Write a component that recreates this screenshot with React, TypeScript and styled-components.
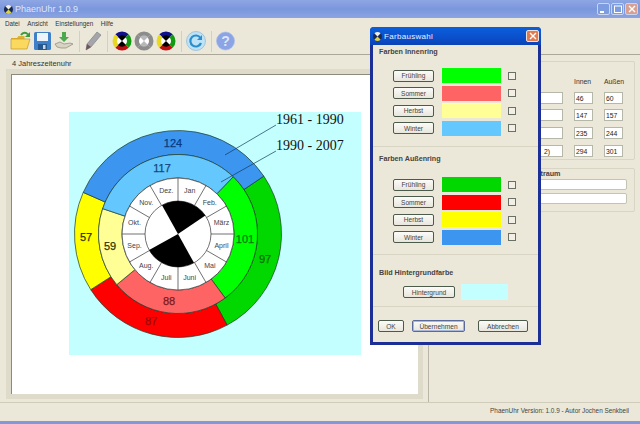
import styled, { createGlobalStyle } from 'styled-components';

const GlobalStyle = createGlobalStyle`
  html, body {
    margin: 0;
    padding: 0;
    background: #ece9d8;
    overflow: hidden;
  }
  * {
    box-sizing: border-box;
  }
`;

const CX = 177;
const CY = 232;

const polar = (r: number, deg: number) => {
  const a = ((deg - 90) * Math.PI) / 180;
  return [CX + r * Math.cos(a), CY + r * Math.sin(a)];
};

const ringPath = (r1: number, r2: number, from: number, to: number) => {
  const [ax, ay] = polar(r2, from);
  const [bx, by] = polar(r2, to);
  const [cx, cy] = polar(r1, to);
  const [dx, dy] = polar(r1, from);
  const large = to - from > 180 ? 1 : 0;
  return `M${ax} ${ay}A${r2} ${r2} 0 ${large} 1 ${bx} ${by}L${cx} ${cy}A${r1} ${r1} 0 ${large} 0 ${dx} ${dy}Z`;
};

const slicePath = (r: number, from: number, to: number) => {
  const [ax, ay] = polar(r, from);
  const [bx, by] = polar(r, to);
  return `M${CX} ${CY}L${ax} ${ay}A${r} ${r} 0 0 1 ${bx} ${by}Z`;
};

const outerRing = [
  { days: 97, color: '#00d800' },
  { days: 87, color: '#ff0000' },
  { days: 57, color: '#ffff00' },
  { days: 124, color: '#3c96f0' },
];
const innerRing = [
  { days: 101, color: '#00ff00' },
  { days: 88, color: '#ff6464' },
  { days: 59, color: '#ffff96' },
  { days: 117, color: '#64c8ff' },
];

const months = ['Jan', 'Feb.', 'März', 'April', 'Mai', 'Juni', 'Juli', 'Aug.', 'Sep.', 'Okt.', 'Nov.', 'Dez.'];

const ringLabels = [
  { x: 172, y: 145, t: '124', c: '#0a3a80' },
  { x: 161, y: 170, t: '117', c: '#16457a' },
  { x: 244, y: 241, t: '101', c: '#0a7a0a' },
  { x: 264, y: 261, t: '97', c: '#0a6a0a' },
  { x: 168, y: 303, t: '88', c: '#7a1a1a' },
  { x: 150, y: 323, t: '87', c: '#9a0a0a' },
  { x: 109, y: 248, t: '59', c: '#333300' },
  { x: 85, y: 239, t: '57', c: '#333300' },
];

function Ring({ data, r1, r2, start }: { data: { days: number; color: string }[]; r1: number; r2: number; start: number }) {
  let angle = start;
  return (
    <>
      {data.map((s) => {
        const from = angle;
        angle += (s.days * 360) / 365;
        return <path key={s.color} d={ringPath(r1, r2, from, angle)} fill={s.color} stroke="#1c3a2a" strokeWidth="0.7" />;
      })}
    </>
  );
}

function SeasonChart() {
  return (
    <ChartSvg viewBox="68 110 292 243">
      <rect x="68" y="110" width="292" height="243" fill="#c4ffff" />
      <Ring data={outerRing} r1={79.5} r2={103.5} start={56} />
      <Ring data={innerRing} r1={56} r2={79.5} start={44} />
      <circle cx={CX} cy={CY} r="56" fill="#fff" stroke="#333" strokeWidth="0.7" />
      {months.map((m, i) => {
        const [x1, y1] = polar(33, i * 30);
        const [x2, y2] = polar(56, i * 30);
        const [tx, ty] = polar(45, i * 30 + 15);
        return (
          <g key={m}>
            <line x1={x1} y1={y1} x2={x2} y2={y2} stroke="#333" strokeWidth="0.7" />
            <text x={tx} y={ty + 2.5} textAnchor="middle" fontFamily="'Liberation Sans', sans-serif" fontSize="7" fill="#444">
              {m}
            </text>
          </g>
        );
      })}
      <circle cx={CX} cy={CY} r="33" fill="#fff" stroke="#333" strokeWidth="0.7" />
      <path d={slicePath(33, -29, 56)} fill="#000" />
      <path d={slicePath(33, 151, 241)} fill="#000" />
      {ringLabels.map((l) => (
        <text key={l.t} x={l.x} y={l.y} textAnchor="middle" fontFamily="'Liberation Sans', sans-serif" fontSize="11" fill={l.c} stroke={l.c} strokeWidth="0.25">
          {l.t}
        </text>
      ))}
      <line x1="224" y1="153" x2="275" y2="123" stroke="#123a5a" strokeWidth="0.7" />
      <line x1="220" y1="180" x2="275" y2="149" stroke="#123a5a" strokeWidth="0.7" />
      <text x="275" y="122" fontFamily="'Liberation Serif', serif" fontSize="14" fill="#111">
        1961 - 1990
      </text>
      <text x="275" y="148" fontFamily="'Liberation Serif', serif" fontSize="14" fill="#111">
        1990 - 2007
      </text>
    </ChartSvg>
  );
}

function WheelIcon({ colors, hub }: { colors: string[]; hub: string }) {
  const parts = colors.map((c, i) => {
    const from = i * 90 - 45;
    const rad = (d: number) => ((d - 90) * Math.PI) / 180;
    const p = (d: number) => `${10 + 9.5 * Math.cos(rad(d))} ${10 + 9.5 * Math.sin(rad(d))}`;
    return <path key={i} d={`M10 10L${p(from)}A9.5 9.5 0 0 1 ${p(from + 90)}Z`} fill={c} />;
  });
  return (
    <ToolSvg width="20" height="20" viewBox="0 0 20 20">
      {parts}
      <circle cx="10" cy="10" r="5" fill="#fff" />
      <path d="M10 10L6 6A5.6 5.6 0 0 1 14 6Z M10 10L14 14A5.6 5.6 0 0 1 6 14Z" fill={hub} />
    </ToolSvg>
  );
}

function FolderIcon() {
  return (
    <ToolSvg width="21" height="20" viewBox="0 0 21 20">
      <path d="M1 7h6l1.5-2h6v4H1z" fill="#e0b030" />
      <path d="M1 8h14l5 0-3 10H1z" fill="#fbd95e" stroke="#c49a28" strokeWidth="0.7" />
      <path d="M11 4C13 1 16 1 18 3.5" fill="none" stroke="#3c9a3c" strokeWidth="2" />
      <path d="M20 1v5h-5z" fill="#3c9a3c" />
    </ToolSvg>
  );
}

function FloppyIcon() {
  return (
    <ToolSvg width="19" height="20" viewBox="0 0 19 20">
      <rect x="1" y="1" width="17" height="18" rx="1.5" fill="#3f80c8" />
      <rect x="4" y="2" width="11" height="8" fill="#eef3fa" />
      <rect x="5" y="13" width="9" height="6" fill="#24588f" />
      <rect x="10" y="14" width="2.5" height="4" fill="#c8d8ea" />
    </ToolSvg>
  );
}

function ImportIcon() {
  return (
    <ToolSvg width="20" height="20" viewBox="0 0 20 20">
      <path d="M8 1h4v5h3l-5 5-5-5h3z" fill="#4ca84c" />
      <path d="M1 13l5-2 4 2 6-1 3 1-7 4H7l-4-1z" fill="#d8d4c4" stroke="#8c8878" strokeWidth="0.7" />
    </ToolSvg>
  );
}

function PencilIcon() {
  return (
    <ToolSvg width="18" height="20" viewBox="0 0 18 20">
      <path d="M13 1l4 3-10 12-5 3 1-6z" fill="#a4a4ac" stroke="#78787e" strokeWidth="0.6" />
      <path d="M3 13l4 3-5 3z" fill="#70545a" />
    </ToolSvg>
  );
}

function RefreshIcon() {
  return (
    <ToolSvg width="20" height="20" viewBox="0 0 20 20">
      <circle cx="10" cy="10" r="9.5" fill="#bfe3f6" stroke="#8db4d8" strokeWidth="0.7" />
      <path d="M14.5 7A5.5 5.5 0 1 0 15 12" fill="none" stroke="#2c8fcb" strokeWidth="2.2" />
      <path d="M16 4v5h-5z" fill="#2c8fcb" />
    </ToolSvg>
  );
}

function HelpIcon() {
  return (
    <ToolSvg width="19" height="20" viewBox="0 0 19 20">
      <circle cx="9.5" cy="10" r="9" fill="#8aa4e4" stroke="#a8bcec" strokeWidth="0.7" />
      <text x="9.5" y="15" textAnchor="middle" fontFamily="'Liberation Sans', sans-serif" fontWeight="700" fontSize="14" fill="#dfe6fa">
        ?
      </text>
    </ToolSvg>
  );
}

function TitleLogo() {
  return (
    <svg width="9" height="9" viewBox="0 0 20 20">
      <circle cx="10" cy="10" r="10" fill="#1a2a50" />
      <path d="M10 10L3 3A10 10 0 0 1 17 3Z" fill="#eee" />
      <path d="M10 10L17 17A10 10 0 0 1 3 17Z" fill="#d8d050" />
    </svg>
  );
}

const swatchRows = (names: string[], colors: string[]) =>
  names.map((name, i) => (
    <ColorRow key={name}>
      <WinButton>{name}</WinButton>
      <Swatch $color={colors[i]} />
      <CheckBox />
    </ColorRow>
  ));

const seasons = ['Frühling', 'Sommer', 'Herbst', 'Winter'];

const tableRows = [
  { hint: '', inner: '46', outer: '60' },
  { hint: '', inner: '147', outer: '157' },
  { hint: '', inner: '235', outer: '244' },
  { hint: '2)', inner: '294', outer: '301' },
];

export default function App() {
  return (
    <>
      <GlobalStyle />
      <AppWindow>
        <TitleBar>
          <TitleLogo />
          <TitleText>PhaenUhr 1.0.9</TitleText>
          <CaptionButtons>
            <CaptionButton>
              <svg width="7" height="7" viewBox="0 0 7 7">
                <rect x="0" y="5" width="4" height="2" fill="#fff" />
              </svg>
            </CaptionButton>
            <CaptionButton>
              <svg width="8" height="8" viewBox="0 0 8 8">
                <rect x="0.5" y="1" width="7" height="6.5" fill="none" stroke="#fff" />
              </svg>
            </CaptionButton>
            <CaptionButton $close>
              <svg width="8" height="8" viewBox="0 0 8 8">
                <path d="M1 1l6 6M7 1l-6 6" stroke="#fff" strokeWidth="1.4" />
              </svg>
            </CaptionButton>
          </CaptionButtons>
        </TitleBar>
        <MenuBar>
          <span>Datei</span>
          <span>Ansicht</span>
          <span>Einstellungen</span>
          <span>Hilfe</span>
        </MenuBar>
        <ToolBar>
          <FolderIcon />
          <FloppyIcon />
          <ImportIcon />
          <ToolSeparator />
          <PencilIcon />
          <ToolSeparator />
          <WheelIcon colors={['#10108a', '#109a10', '#c01010', '#e8d820']} hub="#000" />
          <WheelIcon colors={['#8c8c8c', '#8c8c8c', '#8c8c8c', '#8c8c8c']} hub="#b8b8b8" />
          <WheelIcon colors={['#10108a', '#109a10', '#c01010', '#e8d820']} hub="#000" />
          <ToolSeparator />
          <RefreshIcon />
          <ToolSeparator />
          <HelpIcon />
        </ToolBar>
        <MainArea>
          <LeftPanel>
            <PanelTitle>4 Jahreszeitenuhr</PanelTitle>
            <PictureBox>
              <SeasonChart />
            </PictureBox>
          </LeftPanel>
          <RightPanel>
            <GroupBox $height={99}>
              <DataGrid>
                <span />
                <ColumnHead>Innen</ColumnHead>
                <ColumnHead>Außen</ColumnHead>
                {tableRows.map((r) => (
                  <DataRow key={r.inner}>
                    <WideInput>{r.hint}</WideInput>
                    <SmallInput>{r.inner}</SmallInput>
                    <SmallInput>{r.outer}</SmallInput>
                  </DataRow>
                ))}
              </DataGrid>
            </GroupBox>
            <GroupBox $height={44}>
              <GroupTitle>Vergleichszeitraum</GroupTitle>
              <RangeInput />
              <RangeInput />
            </GroupBox>
          </RightPanel>
        </MainArea>
        <StatusBar>PhaenUhr Version: 1.0.9 - Autor Jochen Senkbeil</StatusBar>

        <Dialog>
          <DialogTitle>
            <TitleLogo />
            <DialogTitleText>Farbauswahl</DialogTitleText>
            <DialogClose>
              <svg width="8" height="8" viewBox="0 0 8 8">
                <path d="M1 1l6 6M7 1l-6 6" stroke="#fff" strokeWidth="1.4" />
              </svg>
            </DialogClose>
          </DialogTitle>
          <DialogSection $height={102} $top={2}>
            <SectionHeading>Farben Innenring</SectionHeading>
            <ColorRows $top={10}>{swatchRows(seasons, ['#00ff00', '#ff6464', '#ffff96', '#64c8ff'])}</ColorRows>
          </DialogSection>
          <DialogSection $height={108} $top={7}>
            <SectionHeading>Farben Außenring</SectionHeading>
            <ColorRows $top={12}>{swatchRows(seasons, ['#00d800', '#ff0000', '#ffff00', '#3c96f0'])}</ColorRows>
          </DialogSection>
          <DialogSection $height={52} $top={13}>
            <SectionHeading>Bild Hintergrundfarbe</SectionHeading>
            <BackgroundRow>
              <WinButton $width={52}>Hintergrund</WinButton>
              <BackgroundSwatch />
            </BackgroundRow>
          </DialogSection>
          <DialogFooter>
            <WinButton $width={26}>OK</WinButton>
            <WinButton $width={53} $focused>
              Übernehmen
            </WinButton>
            <CancelSlot>
              <WinButton $width={50}>Abbrechen</WinButton>
            </CancelSlot>
          </DialogFooter>
        </Dialog>
      </AppWindow>
    </>
  );
}

const AppWindow = styled.div`
  position: relative;
  width: 640px;
  height: 424px;
  display: flex;
  flex-direction: column;
  background: #ebe8d9;
  border-bottom: 3px solid #8496dc;
  font-family: 'Liberation Sans', Arial, sans-serif;
  color: #222;
  overflow: hidden;
`;

const TitleBar = styled.div`
  height: 18px;
  display: flex;
  align-items: center;
  gap: 2px;
  padding: 0 2px 0 4px;
  background: linear-gradient(to bottom, #8ea6e4 0%, #7b97dc 50%, #8aa3e2 100%);
`;

const TitleText = styled.span`
  font-size: 9px;
  color: #dde6fa;
`;

const CaptionButtons = styled.div`
  margin-left: auto;
  display: flex;
  gap: 1px;
`;

const CaptionButton = styled.div<{ $close?: boolean }>`
  width: 13px;
  height: 12px;
  display: flex;
  align-items: center;
  justify-content: center;
  border: 1px solid #c8d4f2;
  border-radius: 2px;
  background: ${({ $close }) => ($close ? '#d8a090' : '#7d9ce0')};
`;

const MenuBar = styled.div`
  height: 10px;
  display: flex;
  align-items: center;
  padding-left: 5px;
  gap: 7.5px;
  font-size: 6.3px;
  color: #333;
`;

const ToolBar = styled.div`
  height: 27px;
  display: flex;
  align-items: center;
  gap: 2px;
  padding: 0 0 0 10px;
  border-bottom: 1px solid #aca899;
`;

const ToolSvg = styled.svg`
  flex-shrink: 0;
`;

const ToolSeparator = styled.div`
  width: 1px;
  height: 21px;
  margin: 0 2.5px;
  background: #d4d0c0;
`;

const MainArea = styled.div`
  flex: 1;
  display: flex;
  min-height: 0;
`;

const LeftPanel = styled.div`
  width: 429px;
  padding: 4px 0 0 11px;
  border-right: 1px solid #b8b5a6;
  display: flex;
  flex-direction: column;
`;

const PanelTitle = styled.div`
  height: 15px;
  margin-left: 1px;
  font-size: 7.5px;
  line-height: 10px;
  color: #333;
`;

const PictureBox = styled.div`
  width: 407px;
  height: 320px;
  padding: 37px 0 0 57px;
  background: #fff;
  border-top: 1px solid #8c8a7c;
  border-left: 1px solid #8c8a7c;
  outline: 5px solid #dedbca;
  outline-offset: 0;
`;

const ChartSvg = styled.svg`
  display: block;
  width: 292px;
  height: 243px;
`;

const RightPanel = styled.div`
  flex: 1;
  padding: 6px 5px 0 3px;
  display: flex;
  flex-direction: column;
  gap: 8px;
`;

const GroupBox = styled.div<{ $height: number }>`
  height: ${({ $height }) => $height}px;
  border: 1px solid #d8d5c4;
  border-radius: 2px;
  display: flex;
  flex-direction: column;
  padding: 0 7px 0 0;
  align-items: flex-end;
`;

const DataGrid = styled.div`
  margin-top: 16px;
  display: grid;
  grid-template-columns: 62px 19px 19px;
  column-gap: 11px;
  row-gap: 5.7px;
  margin-right: 4px;
  font-size: 6.8px;
`;

const DataRow = styled.div`
  display: contents;
`;

const ColumnHead = styled.div`
  font-size: 6.8px;
  height: 8px;
  line-height: 8px;
  color: #333;
  white-space: nowrap;
`;

const WideInput = styled.div`
  height: 12px;
  background: #fff;
  border: 1px solid #b5b8a8;
  line-height: 11px;
  padding-left: 42px;
`;

const SmallInput = styled.div`
  height: 12px;
  background: #fff;
  border: 1px solid #b5b8a8;
  line-height: 11px;
  padding-left: 1px;
`;

const GroupTitle = styled.div`
  margin-top: -1px;
  width: 128px;
  font-size: 7.2px;
  font-weight: 700;
  line-height: 11px;
  color: #444;
  text-align: left;
  padding-left: 62px;
  white-space: nowrap;
  margin-right: 66px;
`;

const RangeInput = styled.div`
  width: 190px;
  height: 11px;
  margin-bottom: 3px;
  background: #fff;
  border: 1px solid #c4c4b4;
  border-radius: 2px;
`;

const StatusBar = styled.div`
  height: 19px;
  display: flex;
  align-items: center;
  justify-content: flex-end;
  padding: 0 11px 3px 0;
  font-size: 6.4px;
  color: #444;
  border-top: 1px solid #d0cdbc;
`;

const Dialog = styled.div`
  position: absolute;
  left: 370px;
  top: 27px;
  width: 171px;
  height: 318px;
  background: #ebe8d9;
  border: 3px solid #1c2f96;
  border-top: none;
  border-radius: 4px 4px 0 0;
`;

const DialogTitle = styled.div`
  height: 18px;
  margin: 0 -3px;
  padding: 0 2px 0 3px;
  display: flex;
  align-items: center;
  gap: 2px;
  background: linear-gradient(to bottom, #0b5fdc, #0a4cc8 70%, #0a44b4);
  border-radius: 4px 4px 0 0;
`;

const DialogTitleText = styled.span`
  font-size: 8px;
  color: #e8f0ff;
  letter-spacing: 0.3px;
`;

const DialogClose = styled.div`
  margin-left: auto;
  width: 13px;
  height: 12px;
  display: flex;
  align-items: center;
  justify-content: center;
  background: #e07a50;
  border: 1px solid #f0e0d8;
  border-radius: 2px;
`;

const DialogSection = styled.section<{ $height: number; $top: number }>`
  height: ${({ $height }) => $height}px;
  padding: ${({ $top }) => $top}px 3px 0 6px;
  border-bottom: 1px solid #d8d5c4;
`;

const SectionHeading = styled.div`
  font-size: 7.2px;
  font-weight: 700;
  line-height: 10px;
  color: #444;
`;

const ColorRows = styled.div<{ $top: number }>`
  margin: ${({ $top }) => $top}px 0 0 14px;
  display: flex;
  flex-direction: column;
`;

const ColorRow = styled.div`
  height: 17.5px;
  display: grid;
  grid-template-columns: 41px 59px 8px;
  column-gap: 7.5px;
  align-items: center;
`;

const WinButton = styled.div<{ $width?: number; $focused?: boolean }>`
  ${({ $width }) => ($width ? `width: ${$width}px;` : '')}
  height: 12px;
  display: flex;
  align-items: center;
  justify-content: center;
  font-size: 6.6px;
  color: #444;
  background: linear-gradient(to bottom, #fbfbf8, #e8e6dc);
  border: 1px solid ${({ $focused }) => ($focused ? '#5a6a9a' : '#4c5a4c')};
  border-radius: 2px;
  box-shadow: ${({ $focused }) => ($focused ? 'inset 0 0 0 1px #a8b8dc' : 'none')};
`;

const Swatch = styled.div<{ $color: string }>`
  height: 15px;
  background: ${({ $color }) => $color};
`;

const CheckBox = styled.div`
  width: 8px;
  height: 8px;
  background: #f2f0e6;
  border: 1px solid #6a7064;
`;

const BackgroundRow = styled.div`
  margin: 6px 0 0 24px;
  display: flex;
  align-items: center;
  gap: 6px;
`;

const BackgroundSwatch = styled.div`
  width: 47px;
  height: 16px;
  background: #c4ffff;
`;

const DialogFooter = styled.div`
  display: flex;
  gap: 8px;
  padding: 13px 0 0 5px;
`;

const CancelSlot = styled.div`
  margin-left: 5px;
`;
